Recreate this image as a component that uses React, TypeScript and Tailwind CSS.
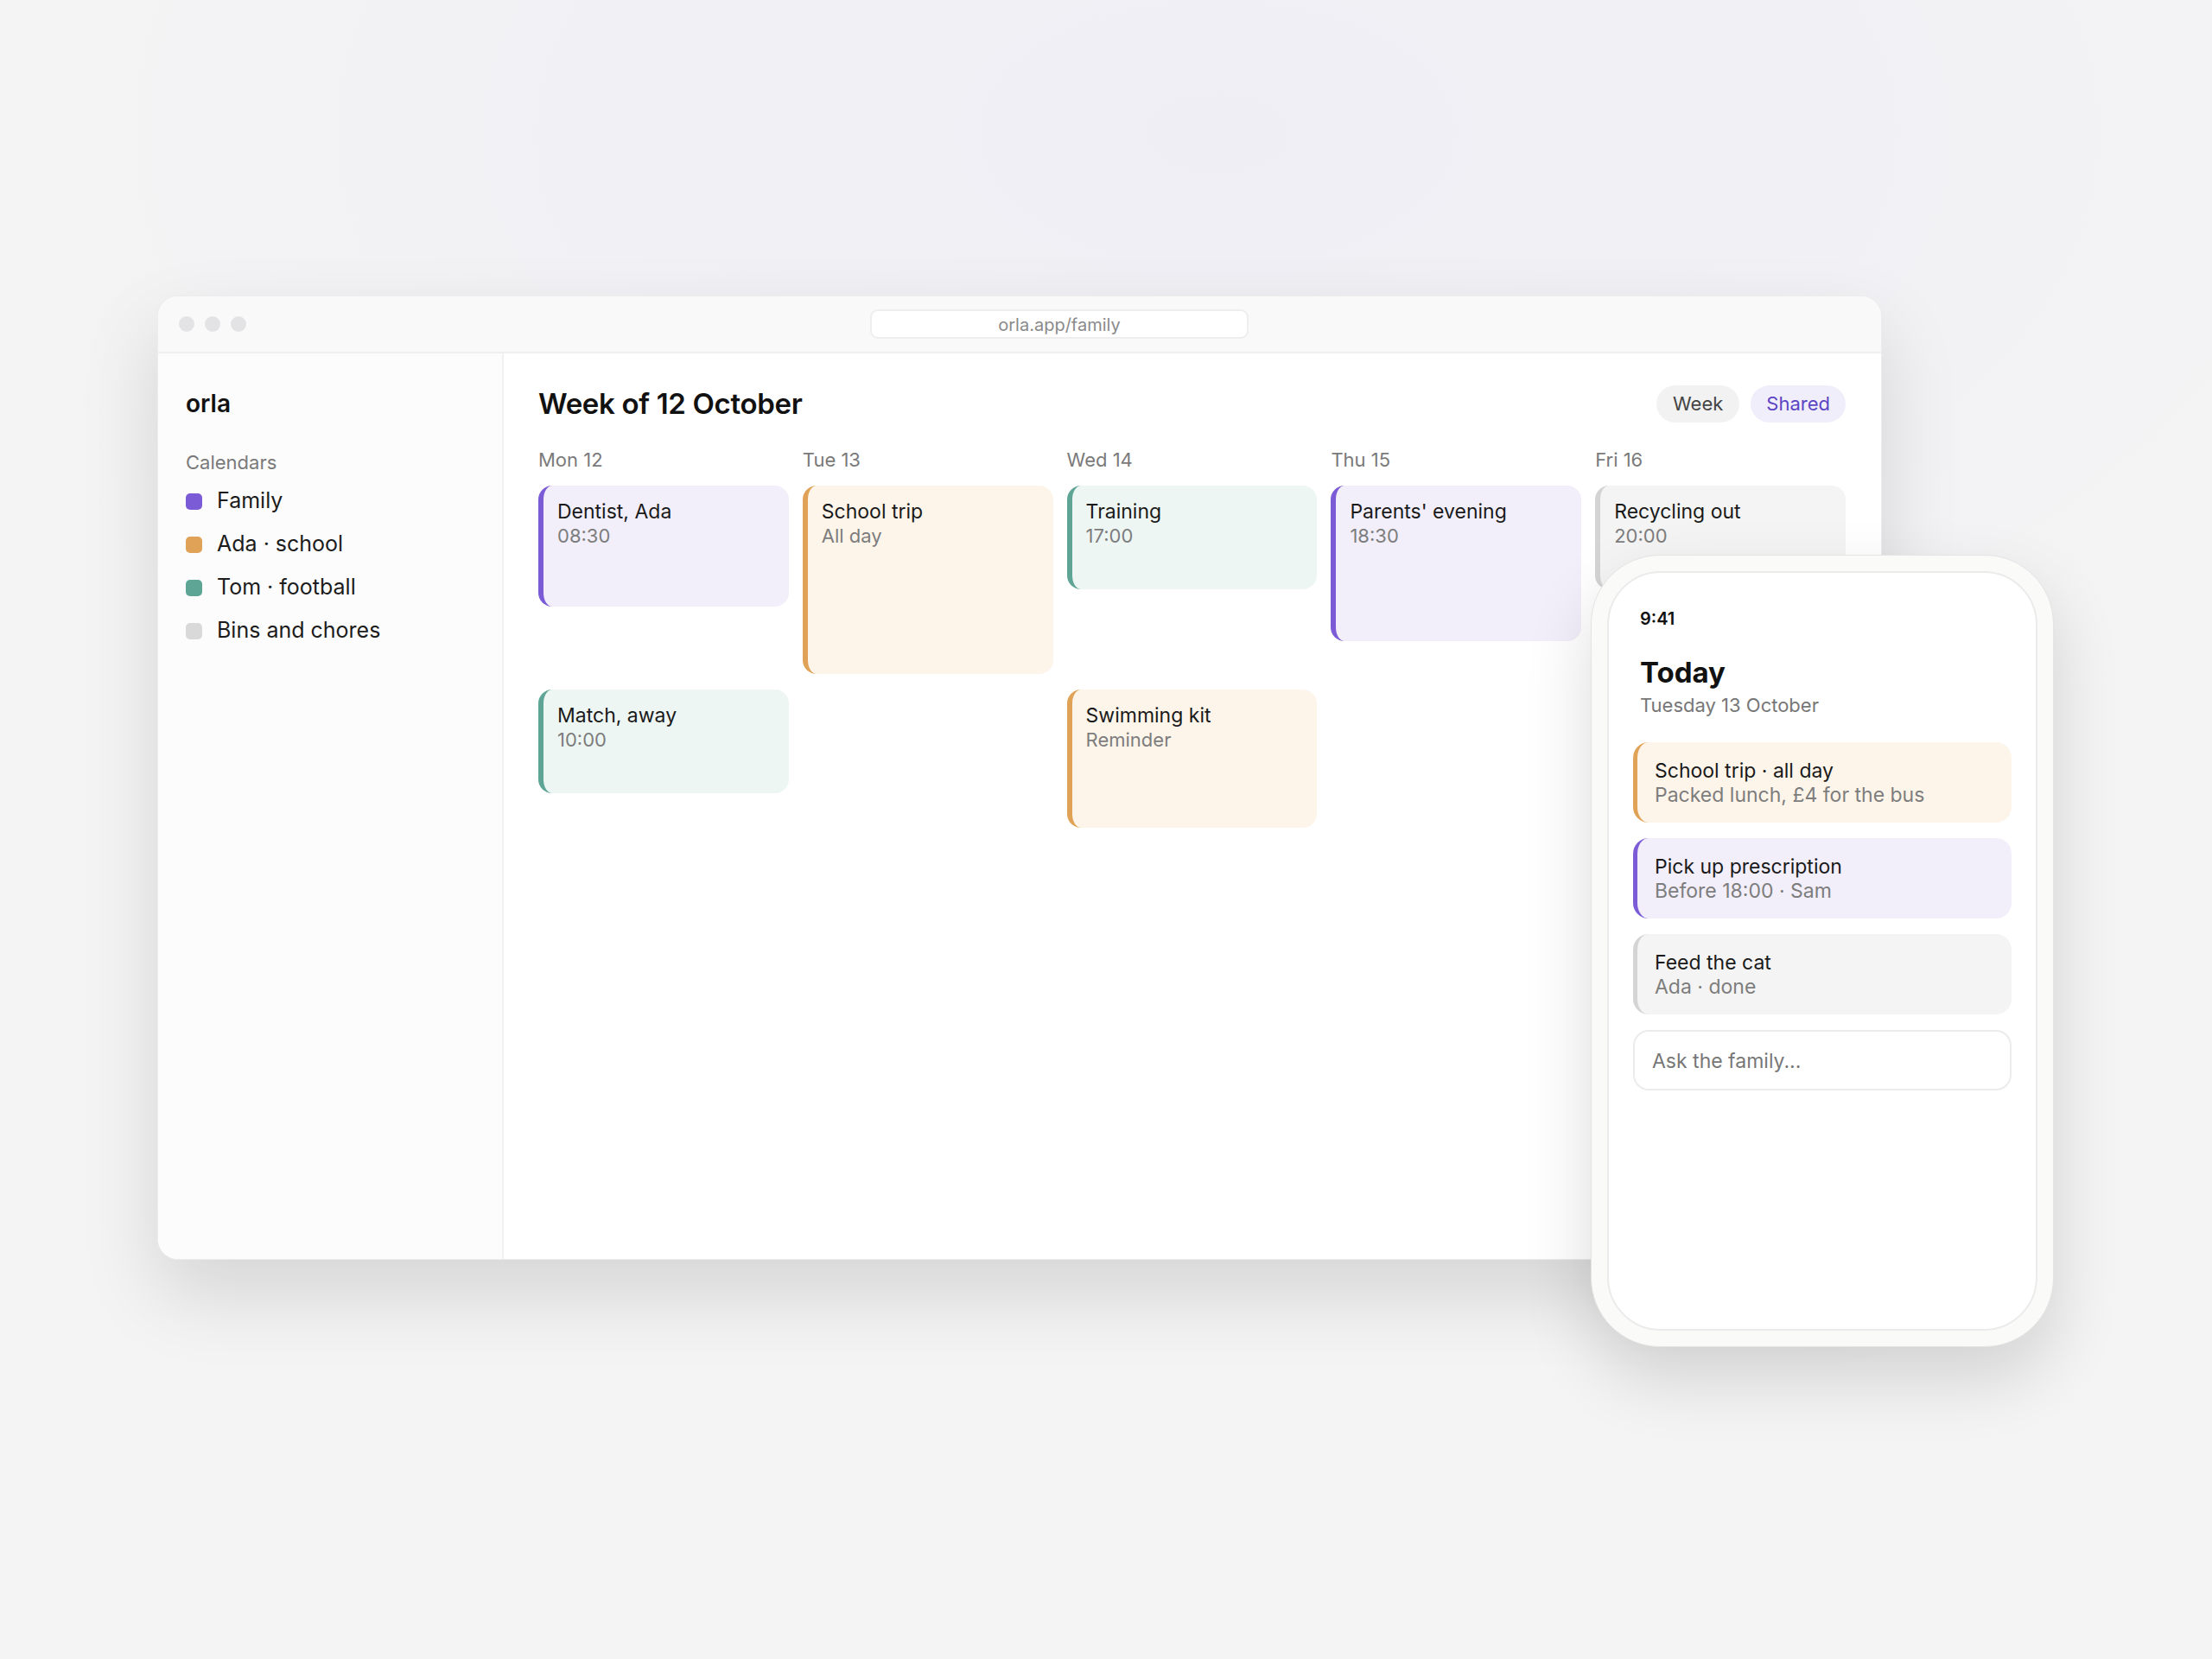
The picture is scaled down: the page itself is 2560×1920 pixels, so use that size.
const CALENDARS = [
  { name: "Family", dot: "bg-[#7c5cd6]" },
  { name: "Ada · school", dot: "bg-[#e0a257]" },
  { name: "Tom · football", dot: "bg-[#5ea596]" },
  { name: "Bins and chores", dot: "bg-[#d9d9d9]" },
];

const TONE = {
  purple: "border-[#7c5cd6] bg-[#f2effb]",
  orange: "border-[#e0a257] bg-[#fdf5ea]",
  teal: "border-[#5ea596] bg-[#eef6f4]",
  gray: "border-[#d4d4d4] bg-[#f4f4f4]",
};

type Tone = keyof typeof TONE;

interface EventCard {
  title: string;
  sub: string;
  tone: Tone;
  h: string;
  col: string;
  row: string;
}

const DAYS = ["Mon 12", "Tue 13", "Wed 14", "Thu 15", "Fri 16"];

const EVENTS: EventCard[] = [
  { title: "Dentist, Ada", sub: "08:30", tone: "purple", h: "h-[140px]", col: "col-start-1", row: "row-start-1" },
  { title: "School trip", sub: "All day", tone: "orange", h: "h-[218px]", col: "col-start-2", row: "row-start-1" },
  { title: "Training", sub: "17:00", tone: "teal", h: "h-[120px]", col: "col-start-3", row: "row-start-1" },
  { title: "Parents' evening", sub: "18:30", tone: "purple", h: "h-[180px]", col: "col-start-4", row: "row-start-1" },
  { title: "Recycling out", sub: "20:00", tone: "gray", h: "h-[120px]", col: "col-start-5", row: "row-start-1" },
  { title: "Match, away", sub: "10:00", tone: "teal", h: "h-[120px]", col: "col-start-1", row: "row-start-2" },
  { title: "Swimming kit", sub: "Reminder", tone: "orange", h: "h-[160px]", col: "col-start-3", row: "row-start-2" },
];

const TODAY: { title: string; sub: string; tone: Tone }[] = [
  { title: "School trip · all day", sub: "Packed lunch, £4 for the bus", tone: "orange" },
  { title: "Pick up prescription", sub: "Before 18:00 · Sam", tone: "purple" },
  { title: "Feed the cat", sub: "Ada · done", tone: "gray" },
];

function BrowserWindow() {
  return (
    <div className="flex h-[1116px] w-[1996px] flex-col overflow-hidden rounded-[24px] border border-[#ececec] bg-white shadow-[0_40px_90px_rgba(0,0,0,0.13)]">
      {/* title bar */}
      <div className="flex h-[66px] shrink-0 items-center gap-[14px] border-b-2 border-[#efefef] bg-[#f9f9f9] px-6">
        <div className="flex gap-3">
          <span className="h-[18px] w-[18px] rounded-full bg-[#e3e3e6]" />
          <span className="h-[18px] w-[18px] rounded-full bg-[#e3e3e6]" />
          <span className="h-[18px] w-[18px] rounded-full bg-[#e3e3e6]" />
        </div>
        <div className="flex flex-1 justify-center">
          <div className="flex h-[34px] w-[438px] items-center justify-center rounded-[9px] border-2 border-[#eeeeee] bg-white pt-[2px] text-[20px] text-[#8a8a8a]">
            orla.app/family
          </div>
        </div>
      </div>

      <div className="flex min-h-0 flex-1">
        {/* sidebar */}
        <aside className="w-[400px] shrink-0 border-r-2 border-[#f1f1f1] bg-[#fcfcfc] pl-8 pt-[41px]">
          <div className="text-[28px] font-semibold leading-[34px] text-[#111]">orla</div>
          <div className="mt-[38px] text-[22px] leading-[26px] text-[#7a7a7a]">Calendars</div>
          <ul className="mt-[7px] flex flex-col">
            {CALENDARS.map((c) => (
              <li key={c.name} className="flex h-[50px] items-center gap-[17px]">
                <span className={`h-[19px] w-[19px] rounded-[5px] ${c.dot}`} />
                <span className="text-[25px] text-[#1c1c1c]">{c.name}</span>
              </li>
            ))}
          </ul>
        </aside>

        {/* main */}
        <main className="flex-1 pl-10 pr-[41px] pt-[37px]">
          <div className="flex h-[43px] items-center justify-between">
            <h1 className="text-[33px] font-semibold tracking-[-0.01em] text-[#111]">Week of 12 October</h1>
            <div className="flex gap-[13px]">
              <span className="flex h-[43px] items-center rounded-full bg-[#f2f2f2] px-[19px] text-[22px] text-[#444]">
                Week
              </span>
              <span className="flex h-[43px] items-center rounded-full bg-[#f1eefb] px-[18px] text-[22px] text-[#5b45c4]">
                Shared
              </span>
            </div>
          </div>

          <div className="mt-[29px] grid grid-cols-5 gap-x-4">
            {DAYS.map((d) => (
              <div key={d} className="text-[22px] leading-[28px] text-[#7a7a7a]">
                {d}
              </div>
            ))}
          </div>

          <div className="mt-4 grid grid-cols-5 items-start gap-x-4 gap-y-[18px]">
            {EVENTS.map((e) => (
              <div
                key={e.title}
                className={`${e.col} ${e.row} ${e.h} rounded-[16px] border-l-[6px] pl-4 pt-[16px] ${TONE[e.tone]}`}
              >
                <div className="text-[23px] leading-[28px] text-[#1a1a1a]">{e.title}</div>
                <div className="text-[22px] leading-[28px] text-[#7d7d7d]">{e.sub}</div>
              </div>
            ))}
          </div>
        </main>
      </div>
    </div>
  );
}

function Phone() {
  return (
    <div className="absolute left-[1841px] top-[642px] h-[917px] w-[536px] rounded-[80px] border border-[#e4e4e4] bg-[#fafaf9] p-[18px] shadow-[0_36px_80px_rgba(0,0,0,0.14)]">
      <div className="h-full rounded-[62px] border-2 border-[#ebebeb] bg-white px-[28px] pt-[41px]">
        <div className="pl-2">
          <div className="text-[20px] font-semibold leading-[24px] text-[#111]">9:41</div>
          <div className="mt-[30px] text-[33px] font-bold leading-[40px] text-[#111]">Today</div>
          <div className="mt-[5px] text-[22px] leading-[26px] text-[#777]">Tuesday 13 October</div>
        </div>

        <div className="mt-[30px] flex flex-col gap-[18px]">
          {TODAY.map((t) => (
            <div
              key={t.title}
              className={`h-[93px] rounded-[18px] border-l-[5px] pl-[20px] pt-[19px] ${TONE[t.tone]}`}
            >
              <div className="text-[23px] leading-[28px] text-[#1a1a1a]">{t.title}</div>
              <div className="text-[23px] leading-[28px] text-[#7d7d7d]">{t.sub}</div>
            </div>
          ))}
          <div className="flex h-[70px] items-center rounded-[18px] border-2 border-[#ececec] bg-white pl-[20px] pt-[2px] text-[23px] text-[#777]">
            Ask the family...
          </div>
        </div>
      </div>
    </div>
  );
}

export default function App() {
  return (
    <div className="relative h-[1920px] w-[2560px] overflow-hidden bg-[#f4f4f4] bg-[radial-gradient(ellipse_60%_45%_at_55%_8%,#efeef5,transparent)] font-['Inter',sans-serif]">
      <div className="pl-[182px] pt-[342px]">
        <BrowserWindow />
      </div>
      <Phone />
    </div>
  );
}
